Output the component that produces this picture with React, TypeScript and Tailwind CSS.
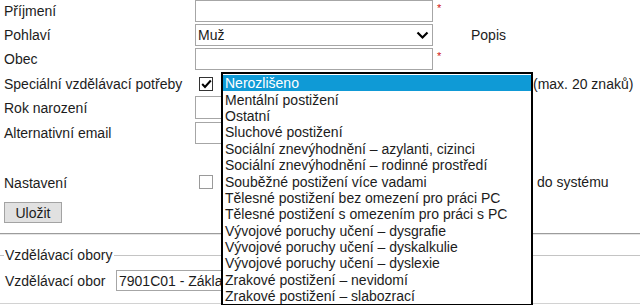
import React from "react";

const items = [
  "Nerozlišeno",
  "Mentální postižení",
  "Ostatní",
  "Sluchové postižení",
  "Sociální znevýhodnění – azylanti, cizinci",
  "Sociální znevýhodnění – rodinné prostředí",
  "Souběžné postižení více vadami",
  "Tělesné postižení bez omezení pro práci PC",
  "Tělesné postižení s omezením pro práci s PC",
  "Vývojové poruchy učení – dysgrafie",
  "Vývojové poruchy učení – dyskalkulie",
  "Vývojové poruchy učení – dyslexie",
  "Zrakové postižení – nevidomí",
  "Zrakové postižení – slabozrací",
];

function Star() {
  return (
    <span className="ml-[4px] self-start mt-[3px] text-[11px] leading-[11px] text-[#d01010]">*</span>
  );
}

function Label({ children }: { children: React.ReactNode }) {
  return <div className="w-[195px] shrink-0 pl-[4px]">{children}</div>;
}

export default function App() {
  return (
    <div className="relative w-[640px] h-[305px] overflow-hidden bg-white text-[14px] leading-[16px] text-[#1c1c1c] font-['Liberation_Sans',Arial,sans-serif]">
      <div className="flex flex-col">
        {/* Příjmení */}
        <div className="flex items-center h-[22px] mb-[2px]">
          <Label>Příjmení</Label>
          <div className="w-[238px] h-[22px] border border-[#a6a6a6]" />
          <Star />
        </div>
        {/* Pohlaví */}
        <div className="flex items-center h-[22px] mb-[2px]">
          <Label>Pohlaví</Label>
          <div className="w-[238px] h-[22px] border border-[#a6a6a6] flex items-center justify-between pl-[2px] pr-[3px]">
            <span>Muž</span>
            <svg width="13" height="9" viewBox="0 0 13 9">
              <polyline points="1.5,1.5 6.5,6.5 11.5,1.5" fill="none" stroke="#000" strokeWidth="2.2" />
            </svg>
          </div>
          <span className="ml-[38px]">Popis</span>
        </div>
        {/* Obec */}
        <div className="flex items-center h-[22px] mb-[2px]">
          <Label>Obec</Label>
          <div className="w-[238px] h-[22px] border border-[#a6a6a6]" />
          <Star />
        </div>
        {/* Speciální */}
        <div className="flex items-center h-[24px]">
          <Label>Speciální vzdělávací potřeby</Label>
          <div className="ml-[4px] w-[14px] h-[14px] border border-[#333] flex items-center justify-center">
            <svg width="11" height="10" viewBox="0 0 11 10">
              <polyline points="1.2,5 4,8 9.8,1.5" fill="none" stroke="#000" strokeWidth="2" />
            </svg>
          </div>
          <span className="ml-[320px]">(max. 20 znaků)</span>
        </div>
        {/* Rok narození */}
        <div className="flex items-center h-[23px] mb-[3px]">
          <Label>Rok narození</Label>
          <div className="w-[120px] h-[23px] border border-[#a6a6a6]" />
        </div>
        {/* Alternativní email */}
        <div className="flex items-center h-[22px]">
          <Label>Alternativní email</Label>
          <div className="w-[120px] h-[22px] border border-[#a6a6a6]" />
        </div>
        <div className="h-[29px]" />
        {/* Nastavení */}
        <div className="flex items-center h-[20px]">
          <Label>Nastavení</Label>
          <div className="ml-[4px] w-[14px] h-[14px] border border-[#9a9a9a] -mt-[3px]" />
          <span className="ml-[324px] -mt-[2px]">do systému</span>
        </div>
        {/* Uložit */}
        <div className="pl-[4px] mt-[9px]">
          <div className="w-[58px] h-[21px] bg-[#e1e1e1] border border-[#a3a3a3] flex items-center justify-center">
            Uložit
          </div>
        </div>
        <div className="mt-[10px] h-[2px] border-t border-[#9c9c9c] border-b border-b-[#e6e6e6]" />
        {/* Fieldset */}
        <div className="mt-[12px] flex items-center h-[16px]">
          <div className="w-[4px] h-[1px] bg-[#c4c4c4]" />
          <span className="px-[1px]">Vzdělávací obory</span>
          <div className="flex-1 h-[1px] bg-[#c4c4c4] ml-[1px]" />
        </div>
        <div className="mt-[7px] flex items-center h-[21px]">
          <div className="w-[116px] pl-[5px]">Vzdělávací obor</div>
          <div className="w-[106px] h-[21px] border border-[#a6a6a6] flex items-center pl-[2px] whitespace-nowrap overflow-hidden">
            7901C01 - Zákla
          </div>
        </div>
        <div className="mt-[12px] h-[1px] bg-[#d2d2d2]" />
      </div>

      {/* Open dropdown list */}
      <div className="absolute left-[221px] top-[72px] w-[312px] h-[234px] border-2 border-black bg-white pt-[1px]">
        {items.map((t, i) => (
          <div
            key={t}
            className={
              "h-[16.4px] flex items-center pl-[2px] whitespace-nowrap " +
              (i === 0 ? "bg-[#0f9ad6] text-white" : "text-[#1c1c1c]")
            }
          >
            {t}
          </div>
        ))}
      </div>
    </div>
  );
}
